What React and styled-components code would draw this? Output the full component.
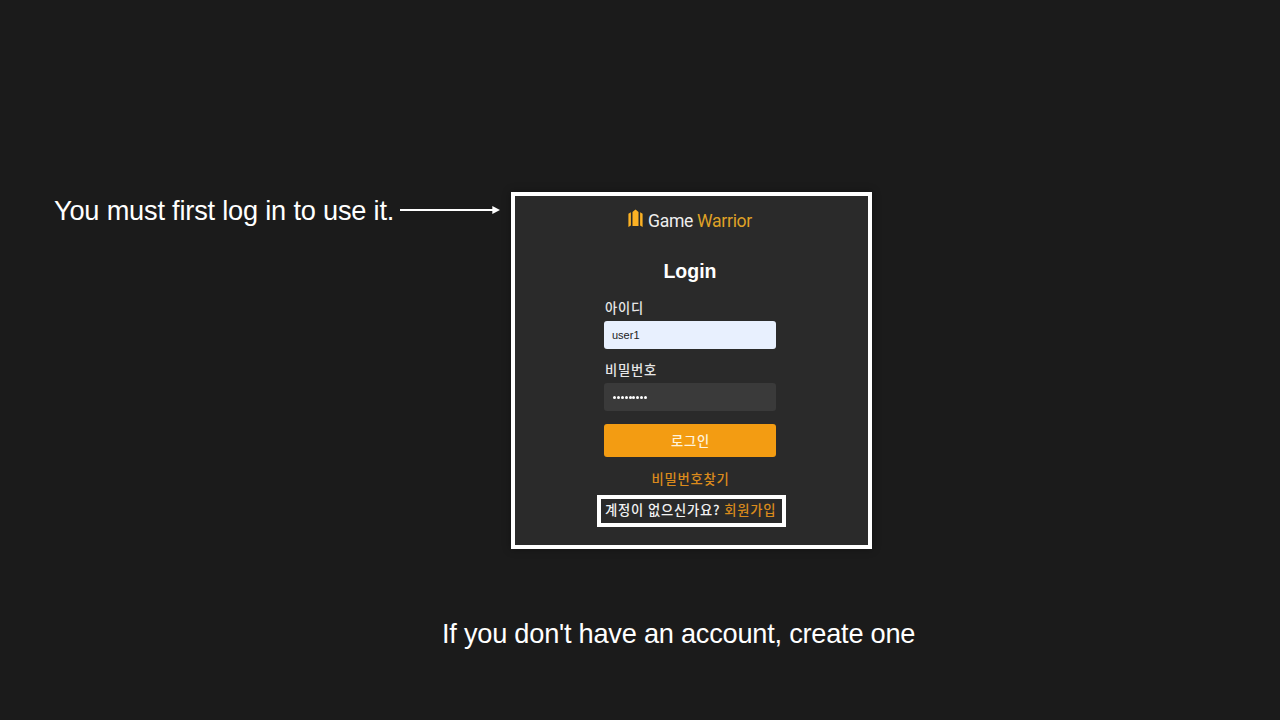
import React from "react";
import styled, { createGlobalStyle } from "styled-components";

const GlobalStyle = createGlobalStyle`
  * { box-sizing: border-box; }
  body { margin: 0; background: #1b1b1b; }
`;

const Slide = styled.main`
  width: 1280px;
  height: 720px;
  overflow: hidden;
  background: #1b1b1b;
  color: #fff;
  font-family: "Liberation Sans", Arial, "Noto Sans CJK KR", sans-serif;
`;

const Stage = styled.section`
  display: flex;
  align-items: flex-start;
  padding: 192px 0 0 54px;
`;

const Caption = styled.p`
  margin: 0;
  font-size: 27.2px;
  line-height: 37px;
  white-space: nowrap;
  letter-spacing: ${(p) => p.$spacing || "0"};
`;

const LeadCaption = styled(Caption)`
  width: 346px;
`;

const Arrow = styled.svg`
  display: block;
  width: 100px;
  height: 10px;
  margin: 13px 11px 0 0;
`;

const Panel = styled.div`
  width: 361px;
  height: 357px;
  border: 4px solid #fff;
  background: #2a2a2a;
  display: flex;
  flex-direction: column;
  align-items: center;
  padding-right: 3px;
  box-shadow: 0 0 8px rgba(0, 0, 0, 0.35);
`;

const Brand = styled.div`
  display: flex;
  align-items: flex-start;
  gap: 5px;
  height: 24px;
  margin-top: 13px;
`;

const BrandIcon = styled.svg`
  display: block;
  width: 15px;
  height: 19px;
`;

const BrandName = styled.span`
  font: 400 17.6px/25px Roboto, sans-serif;
  letter-spacing: -0.32px;
  color: #eee;
  white-space: nowrap;
`;

const Accent = styled.span`
  color: ${(p) => p.$color};
`;

const Title = styled.h1`
  margin: 26px 0 0;
  font: 700 19.5px/24px "Liberation Sans", Arial, sans-serif;
`;

const Form = styled.form`
  width: 172px;
  display: flex;
  flex-direction: column;
  margin-top: 15px;
`;

const Label = styled.label`
  height: 23px;
  font: 500 13.3px/20px "Noto Sans CJK KR", sans-serif;
  letter-spacing: 0.8px;
  color: #e6e6e6;
  padding-left: 1px;
  white-space: nowrap;
`;

const Input = styled.input`
  width: 172px;
  height: 28px;
  border: 0;
  border-radius: 3px;
  padding: 0 8px;
  margin: 0 0 11px;
  outline: 0;
  background: #e8f0fe;
  color: #222;
  font: 400 11px/28px "Liberation Sans", Arial, sans-serif;
`;

const Dots = styled.div`
  width: 172px;
  height: 28px;
  border-radius: 3px;
  padding-left: 9px;
  margin-bottom: 13px;
  background: #3a3a3a;
  display: flex;
  align-items: center;
  gap: 0.9px;
`;

const Dot = styled.i`
  width: 3px;
  height: 3px;
  border-radius: 50%;
  background: #fff;
`;

const Submit = styled.button`
  height: 33px;
  border: 0;
  border-radius: 3px;
  padding: 0 0 0 1px;
  background: #f39c12;
  color: #fff3dc;
  font: 500 13.3px/33px "Noto Sans CJK KR", sans-serif;
  letter-spacing: 0.8px;
`;

const FindLink = styled.a`
  margin-top: 12px;
  padding-left: 1px;
  height: 20px;
  font: 500 13.3px/20px "Noto Sans CJK KR", sans-serif;
  letter-spacing: 0.8px;
  color: #da8a1c;
  white-space: nowrap;
`;

const SignUp = styled.div`
  width: 189px;
  height: 32px;
  margin: 6px 0 0 3px;
  padding: 0 0 3px 4px;
  border: 4px solid #fff;
  display: flex;
  align-items: center;
  font: 500 13.3px/20px "Noto Sans CJK KR", sans-serif;
  letter-spacing: 0.8px;
  color: #f2f2f2;
  white-space: pre;
`;

const Footer = styled.footer`
  padding: 66px 0 0 442px;
`;

export default function App() {
  return (
    <>
      <GlobalStyle />
      <Slide>
        <Stage>
          <LeadCaption $spacing="-0.2px">You must first log in to use it.</LeadCaption>
          <Arrow viewBox="0 0 100 10">
            <path d="M0 5H94" stroke="#fff" strokeWidth="2" />
            <path d="M92.3 1L100 5L92.3 9Z" fill="#fff" />
          </Arrow>
          <Panel>
            <Brand>
              <BrandIcon viewBox="0 0 15 19" fill="#fbb124">
                <path d="M0.4 4.8L2.9 3.2V16.6L0.4 18Z" />
                <path d="M4.5 3L7.5 0.4L10.5 3V17H4.5Z" />
                <path d="M12.1 3.2L14.6 4.8V18L12.1 16.6Z" />
              </BrandIcon>
              <BrandName>
                Game <Accent $color="#dfa126">Warrior</Accent>
              </BrandName>
            </Brand>
            <Title>Login</Title>
            <Form>
              <Label>아이디</Label>
              <Input defaultValue="user1" />
              <Label>비밀번호</Label>
              <Dots>
                {Array.from({ length: 9 }, (_, i) => (
                  <Dot key={i} />
                ))}
              </Dots>
              <Submit type="button">로그인</Submit>
            </Form>
            <FindLink>비밀번호찾기</FindLink>
            <SignUp>
              계정이 없으신가요? <Accent $color="#da8a1c">회원가입</Accent>
            </SignUp>
          </Panel>
        </Stage>
        <Footer>
          <Caption $spacing="-0.24px">If you don't have an account, create one</Caption>
        </Footer>
      </Slide>
    </>
  );
}
